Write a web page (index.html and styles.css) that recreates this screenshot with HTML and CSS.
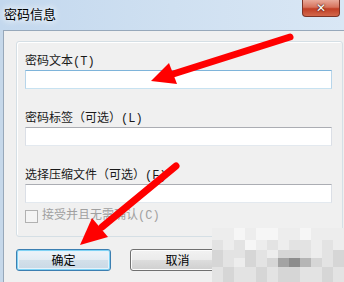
FILE: index.html
```html
<!DOCTYPE html>
<html lang="zh">
<head>
<meta charset="utf-8">
<link rel="stylesheet" href="styles.css">
</head>
<body>
<div class="window">
  <div class="titlebar">
    <span class="title">密码信息</span>
    <span class="close"><span class="x">✕</span></span>
  </div>
  <div class="client">
    <div class="group">
      <div class="label">密码文本(T)</div>
      <div class="input focus"></div>
      <div class="label spaced">密码标签（可选）(L)</div>
      <div class="input"></div>
      <div class="label spaced">选择压缩文件（可选）(F)</div>
      <div class="input"></div>
      <div class="check-row">
        <span class="checkbox"></span>
        <span class="check-label">接受并且无需确认(C)</span>
      </div>
    </div>
    <div class="buttons">
      <div class="btn default">确定</div>
      <div class="btn">取消</div>
    </div>
  </div>
  <div class="mosaic">
    <i class="c1"></i><i class="c1"></i><i class="c0"></i><i class="c1"></i><i class="c0"></i><i class="c0"></i><i class="c1"></i><i class="c1"></i><i class="c0"></i><i class="c1"></i><i class="c1"></i><i class="c1"></i>
    <i class="c2"></i><i class="c1"></i><i class="c2"></i><i class="c0"></i><i class="c1"></i><i class="c2"></i><i class="c1"></i><i class="c2"></i><i class="c2"></i><i class="c1"></i><i class="c2"></i><i class="c1"></i>
    <i class="c3"></i><i class="c2"></i><i class="c2"></i><i class="c3"></i><i class="c2"></i><i class="c1"></i><i class="c3"></i><i class="c3"></i><i class="c2"></i><i class="c1"></i><i class="c2"></i><i class="c3"></i>
    <i class="c3"></i><i class="c2"></i><i class="c1"></i><i class="c3"></i><i class="c2"></i><i class="c3"></i><i class="c5"></i><i class="c4"></i><i class="c6"></i><i class="c3"></i><i class="c2"></i><i class="c3"></i>
    <i class="c2"></i><i class="c3"></i><i class="c2"></i><i class="c2"></i><i class="c3"></i><i class="c2"></i><i class="c3"></i><i class="c3"></i><i class="c2"></i><i class="c2"></i><i class="c3"></i><i class="c2"></i>
  </div>
  <svg class="arrows" width="344" height="282" viewBox="0 0 344 282">
    <line x1="290" y1="37" x2="170" y2="75" stroke="#ff0000" stroke-width="7" stroke-linecap="round"/>
    <polygon points="151,81 177,84 169,63" fill="#ff0000"/>
    <line x1="176" y1="166" x2="102" y2="227" stroke="#ff0000" stroke-width="7" stroke-linecap="round"/>
    <polygon points="80,245 108,237 92,218" fill="#ff0000"/>
  </svg>
</div>
</body>
</html>
```

FILE: styles.css
```css
html, body {
  margin: 0;
  padding: 0;
  background: #f0f0f0;
}

.window {
  position: relative;
  width: 344px;
  height: 282px;
  overflow: hidden;
  background: #c6d8ea;
  font-family: "Noto Sans CJK SC", "Microsoft YaHei", sans-serif;
  font-size: 12px;
  color: #000;
}

.titlebar {
  height: 30px;
  display: flex;
  align-items: flex-start;
  background: linear-gradient(90deg, #c3d8ee 0%, #cfe0f1 50%, #d9e7f5 100%);
}

.title {
  margin: 5px 0 0 4px;
  font-size: 13px;
  line-height: 18px;
  color: #000;
  text-shadow: 0 0 6px #fff, 0 0 8px #fff;
}

.close {
  margin-left: auto;
  margin-right: 4px;
  width: 38px;
  height: 17px;
  box-sizing: border-box;
  border: 1px solid #7c3427;
  border-top: none;
  border-radius: 0 0 4px 4px;
  background: linear-gradient(#e9a99a 0%, #d7735d 45%, #c13f25 55%, #d2684c 100%);
  display: flex;
  align-items: center;
  justify-content: center;
}

.x {
  color: #fff;
  font-family: "DejaVu Sans", sans-serif;
  font-size: 12px;
  font-weight: bold;
  line-height: 14px;
  text-shadow: 0 0 1px #4a1a10, 0 0 2px #4a1a10;
}

.client {
  margin-left: 3px;
  height: 252px;
  box-sizing: border-box;
  border-top: 1px solid #97a8ba;
  border-left: 1px solid #97a8ba;
  background: #f0f0f0;
  padding: 10px 0 0 12px;
}

.group {
  width: 327px;
  box-sizing: border-box;
  border: 1px solid #d5dfe5;
  border-radius: 3px;
  box-shadow: inset 1px 1px 0 #fff;
  padding: 12px 10px 13px 8px;
}

.label,
.check-label {
  font-family: "Liberation Mono", "Noto Sans CJK SC", monospace;
  color: #1a1a1a;
}

.label {
  line-height: 16px;
  height: 16px;
  white-space: nowrap;
}

.label.spaced {
  margin-top: 22px;
}

.input {
  height: 19px;
  box-sizing: border-box;
  background: #fff;
  border: 1px solid #dbdfe6;
  border-top-color: #abadb3;
  border-bottom-color: #e3e9ef;
}

.input.focus {
  border-color: #b7d5ea;
  border-top-color: #7eb4da;
  border-bottom-color: #c7e2f1;
}

.check-row {
  margin-top: 7px;
  height: 13px;
  display: flex;
  align-items: center;
  gap: 4px;
}

.checkbox {
  width: 13px;
  height: 13px;
  box-sizing: border-box;
  border: 1px solid #b1b1b1;
  background: #f4f4f4;
}

.check-label {
  color: #a0a0a0;
  line-height: 13px;
}

.buttons {
  margin-top: 12px;
  display: flex;
  gap: 19px;
}

.btn {
  width: 95px;
  height: 22px;
  box-sizing: border-box;
  border: 1px solid #707070;
  border-radius: 3px;
  background: linear-gradient(#f2f2f2 0%, #ebebeb 50%, #dddddd 51%, #cfcfcf 100%);
  box-shadow: inset 0 0 0 1px #fcfcfc;
  display: flex;
  align-items: center;
  justify-content: center;
  line-height: 16px;
}

.btn.default {
  border-color: #3c7fb1;
  background: linear-gradient(#eef4f9 0%, #e3ecf3 50%, #d3e0ea 51%, #c9d8e5 100%);
  box-shadow: inset 0 0 0 1px #7fd2f4, inset 0 0 0 2px #e6f2fa;
}

.mosaic {
  position: absolute;
  left: 212px;
  top: 228px;
  display: grid;
  grid-template-columns: repeat(12, 11px);
  grid-template-rows: 12px 10px 8px 9px 15px;
}

.mosaic i { display: block; }
.c0 { background: #f6f6f6; }
.c1 { background: #ededed; }
.c2 { background: #e3e3e3; }
.c3 { background: #d6d6d6; }
.c4 { background: #8c8c8c; }
.c5 { background: #a3a3a3; }
.c6 { background: #b5b5b5; }

.arrows {
  position: absolute;
  left: 0;
  top: 0;
  pointer-events: none;
}
```
